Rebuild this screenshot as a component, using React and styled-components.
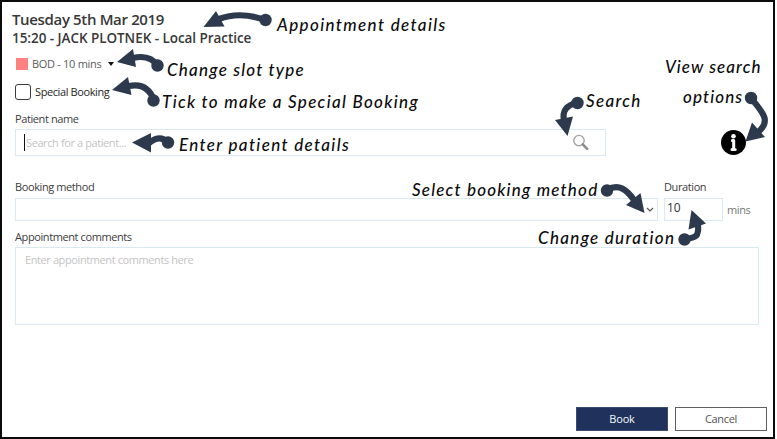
import React from 'react';
import styled, { createGlobalStyle } from 'styled-components';

const GlobalStyle = createGlobalStyle`
  *, *::before, *::after { box-sizing: border-box; }
  body { margin: 0; background: #fff; }
  button { font: inherit; letter-spacing: inherit; }
`;

const Dialog = styled.main`
  position: relative;
  display: flex;
  flex-direction: column;
  width: 775px;
  height: 439px;
  padding: 8px 6px 6px 13px;
  border: 2px solid #0b0b0b;
  background: #fff;
  overflow: hidden;
  color: #3c3c3c;
  font: 11px/16px 'Open Sans', 'Noto Sans', sans-serif;
  letter-spacing: -0.4px;
`;

const Header = styled.header`
  margin-left: -3px;
  color: #383838;
  white-space: nowrap;
`;

const Title = styled.h1`
  margin: 0;
  font-size: 15px;
  line-height: 19px;
  font-weight: 600;
  letter-spacing: -0.35px;
`;

const Subtitle = styled.h2`
  margin: 0;
  font-size: 13.5px;
  line-height: 18px;
  font-weight: 600;
  letter-spacing: -0.05px;
`;

const Text = styled.span`
  white-space: nowrap;
`;

const SlotType = styled.div`
  display: flex;
  align-items: center;
  gap: 6px;
  height: 16px;
  margin: 9px 0 0 1px;
  color: #5c5c5c;
  letter-spacing: -0.3px;
`;

const SlotInner = styled.div`
  display: flex;
  align-items: center;
  gap: 4px;
  width: 86px;
  white-space: nowrap;
`;

const Swatch = styled.span`
  flex: none;
  width: 12px;
  height: 12px;
  background: #ff8080;
`;

const Caret = styled.span`
  border: 3px solid transparent;
  border-top: 4px solid #111;
  border-bottom: 0;
`;

const CheckRow = styled.label`
  display: flex;
  align-items: center;
  gap: 4px;
  height: 16px;
  margin-top: 12px;
  color: #262626;
`;

const CheckBox = styled.span`
  width: 16px;
  height: 16px;
  border: 1px solid #3a3a3a;
  border-radius: 3px;
`;

const Label = styled.div`
  height: 16px;
  margin-top: ${(p) => p.$top || 0}px;
`;

const Field = styled.div`
  display: flex;
  align-items: center;
  width: ${(p) => p.$width}px;
  height: ${(p) => p.$height}px;
  border: 1px solid #d9e9ef;
  background: #fff;
`;

const SearchField = styled(Field)`
  margin-top: 2px;
  padding: 0 15px 0 8px;
  justify-content: space-between;
  color: #c4c4c4;
`;

const Placeholder = styled.span`
  display: flex;
  align-items: center;
  gap: 1px;
`;

const TextCursor = styled.span`
  width: 1px;
  height: 17px;
  background: #111;
`;

const Columns = styled.div`
  display: flex;
  gap: 6px;
  margin-top: 23px;
`;

const Column = styled.div`
  display: flex;
  flex-direction: column;
  gap: 3px;
`;

const SelectField = styled(Field)`
  justify-content: flex-end;
  padding-right: 3px;
`;

const DurationField = styled(Field)`
  align-items: flex-start;
  padding-left: 2px;
  font-size: 12px;
  line-height: 18px;
  letter-spacing: 0;
  color: #333;
`;

const Unit = styled.span`
  align-self: flex-end;
  margin: 0 0 3px -2px;
  color: #777;
`;

const Comments = styled(Field)`
  align-items: flex-start;
  margin-top: 2px;
  padding: 4px 9px;
  color: #c4c4c4;
`;

const Actions = styled.footer`
  display: flex;
  justify-content: flex-end;
  gap: 7px;
  margin-top: auto;
`;

const Button = styled.button`
  width: 92px;
  height: 24px;
  padding: 0;
  border: 1px solid ${(p) => (p.$primary ? '#3c4b70' : '#606060')};
  border-radius: 0;
  background: ${(p) => (p.$primary ? '#20325c' : '#fff')};
  color: ${(p) => (p.$primary ? '#f4f6fa' : '#555')};
  letter-spacing: ${(p) => (p.$primary ? -0.2 : -0.35)}px;
`;

const Overlay = styled.svg`
  position: absolute;
  left: -2px;
  top: -2px;
  pointer-events: none;
`;

const Note = styled.span`
  position: absolute;
  left: ${(p) => p.$x - 2}px;
  top: ${(p) => p.$y - 14}px;
  color: #0c0c0c;
  font: italic 500 17px/24px Lato, 'Open Sans', sans-serif;
  letter-spacing: ${(p) => p.$track}px;
  white-space: nowrap;
`;

const NOTES = [
  { text: 'Appointment details', x: 277, y: 25, track: 1.37 },
  { text: 'Change slot type', x: 167, y: 70, track: 1.22 },
  { text: 'Tick to make a Special Booking', x: 162, y: 102, track: 1.32 },
  { text: 'Enter patient details', x: 179, y: 145, track: 1.35 },
  { text: 'Search', x: 586, y: 101, track: 1.3 },
  { text: 'View search', x: 665, y: 67, track: 1.05 },
  { text: 'options', x: 683, y: 97, track: 1.1 },
  { text: 'Select booking method', x: 412, y: 190, track: 1.2 },
  { text: 'Change duration', x: 538, y: 238, track: 1.3 },
];

const ARROWS = [
  { dot: [265.5, 20], line: 'M265 20Q240 11 219 19', head: '203.5,27 216,11 224.5,26.5' },
  { dot: [157.5, 65.5], line: 'M158 66Q150 54 133 58', head: '117,62 133,49 136,67' },
  { dot: [153.5, 100.5], line: 'M154 100Q147 82 129 86', head: '112,90 128,77 131.5,95' },
  { dot: [168, 142.5], line: 'M168 142.5Q160 134 149 143', head: '132,142.5 151,133 151,152.5' },
  { dot: [577.5, 103], line: 'M577 103Q561 106 564 121', head: '555,120 573,116.5 567.5,136' },
  { dot: [751, 98], line: 'M751 98C763 113 772 121 757 133', head: '745.5,141.5 752,122.5 765,137' },
  { dot: [607, 190.5], line: 'M607 190C619 183 627 190 634 200', head: '640.5,193 626,205 644.5,213' },
  { dot: [684.5, 239.5], line: 'M684 239C697 238 699 236 698 224', head: '688.5,229.5 706,223.5 691.5,210' },
];

function SearchIcon() {
  return (
    <svg width="18" height="18" viewBox="0 0 18 18" fill="none">
      <circle cx="7" cy="6.6" r="5.2" stroke="#a2a2a2" strokeWidth="1.4" />
      <path d="M10.7 10.3L15.2 14.8" stroke="#8d8d8d" strokeWidth="2.6" strokeLinecap="round" />
    </svg>
  );
}

function Annotations() {
  return (
    <>
      <Overlay width="777" height="439" viewBox="0 0 777 439">
        <circle cx="733.5" cy="142.5" r="12.5" fill="#000" />
        <circle cx="733.5" cy="136.3" r="2.3" fill="#fff" />
        <path
          d="M732.4 140.6H733.7V149.4M732 149.6H735.2"
          fill="none"
          stroke="#fff"
          strokeWidth="3"
          strokeLinecap="round"
          strokeLinejoin="round"
        />
        {ARROWS.map((a) => (
          <g key={a.line} fill="#2d394c">
            <path d={a.line} fill="none" stroke="#2d394c" strokeWidth="6.2" />
            <circle cx={a.dot[0]} cy={a.dot[1]} r="6.2" />
            <polygon points={a.head} />
          </g>
        ))}
      </Overlay>
      {NOTES.map((n) => (
        <Note key={n.text} $x={n.x} $y={n.y} $track={n.track}>{n.text}</Note>
      ))}
    </>
  );
}

export default function App() {
  return (
    <>
      <GlobalStyle />
      <Dialog>
        <Header>
          <Title>Tuesday 5th Mar 2019</Title>
          <Subtitle>15:20 - JACK PLOTNEK - Local Practice</Subtitle>
        </Header>
        <SlotType>
          <SlotInner>
            <Swatch />
            BOD - 10 mins
          </SlotInner>
          <Caret />
        </SlotType>
        <CheckRow>
          <CheckBox />
          <Text>Special Booking</Text>
        </CheckRow>
        <Label $top={11}><Text>Patient name</Text></Label>
        <SearchField $width={591} $height={27}>
          <Placeholder><TextCursor /><Text>Search for a patient...</Text></Placeholder>
          <SearchIcon />
        </SearchField>
        <Columns>
          <Column>
            <Label><Text>Booking method</Text></Label>
            <SelectField $width={643} $height={23}>
              <svg width="8" height="6" viewBox="0 0 8 6" fill="none">
                <path d="M1 1L4 4L7 1" stroke="#555" strokeWidth="1.2" />
              </svg>
            </SelectField>
          </Column>
          <Column>
            <Label><Text>Duration</Text></Label>
            <DurationField $width={59} $height={23}>10</DurationField>
          </Column>
          <Unit>mins</Unit>
        </Columns>
        <Label $top={8}><Text>Appointment comments</Text></Label>
        <Comments $width={744} $height={78}>
          <Text>Enter appointment comments here</Text>
        </Comments>
        <Actions>
          <Button $primary>Book</Button>
          <Button>Cancel</Button>
        </Actions>
        <Annotations />
      </Dialog>
    </>
  );
}
